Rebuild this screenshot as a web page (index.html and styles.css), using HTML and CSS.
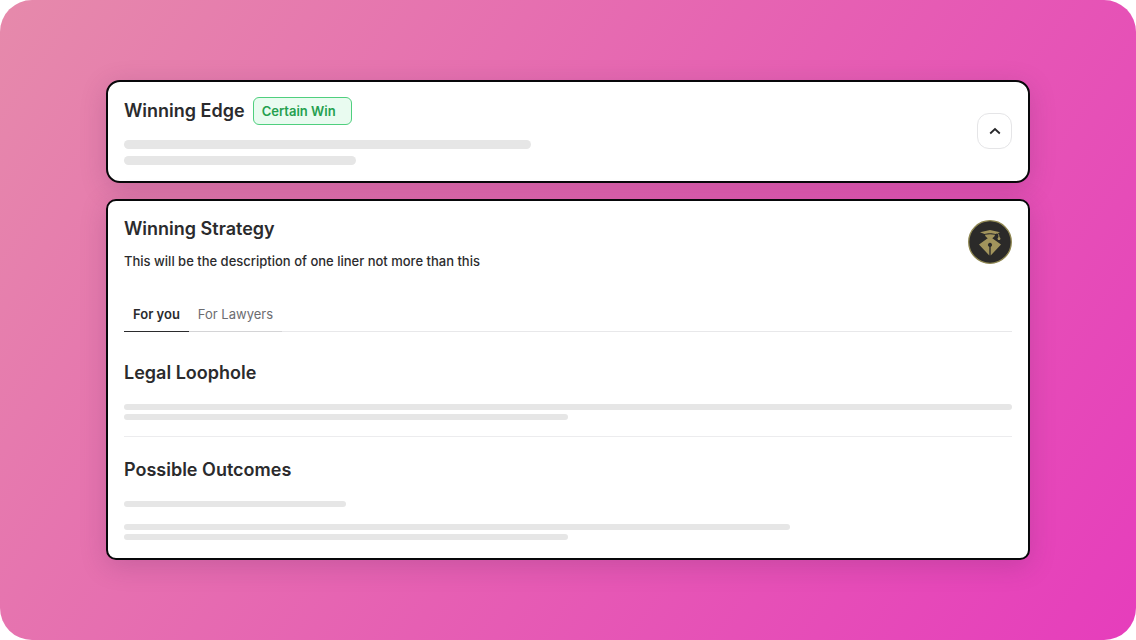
FILE: index.html
```html
<!DOCTYPE html>
<html lang="en">
<head>
<meta charset="utf-8">
<meta name="viewport" content="width=device-width, initial-scale=1">
<title>Winning Edge</title>
<link rel="stylesheet" href="styles.css">
</head>
<body>
<main class="stage">
  <section class="card edge">
    <div class="edge-body">
      <div class="edge-head">
        <h2 class="title">Winning Edge</h2>
        <span class="badge">Certain Win</span>
      </div>
      <div class="bars bars-thick">
        <span class="bar w-edge-long"></span>
        <span class="bar w-edge-short"></span>
      </div>
    </div>
    <button class="toggle" type="button" aria-label="Collapse">
      <svg width="12" height="8" viewBox="0 0 12 8" fill="none" stroke="#27272a" stroke-width="1.8" stroke-linejoin="miter"><path d="M1.200 6.500 6 2l4.800 4.500"/></svg>
    </button>
  </section>

  <section class="card strategy">
    <header class="strategy-head">
      <div>
        <h2 class="title">Winning Strategy</h2>
        <p class="desc">This will be the description of one liner not more than this</p>
      </div>
      <svg class="avatar" viewBox="0 0 44 44" role="img" aria-label="Legal tutor">
        <circle cx="22" cy="22" r="21.300" fill="#2b2a29" stroke="#8f8751" stroke-width="1.300"/>
        <g fill="#a2945c">
          <path d="M12 12.300 22 10l10 2.300-4.500 1.700c-3-1-8-1-11 0z"/>
          <path d="M17 14.800c3-.9 7-.9 10 0-.2 1.700-1.500 2.700-2.700 3.500l8.700 6.200L22.700 35.500v-8.600a2.100 2.100 0 1 0-1.400 0v8.600L11 24.500l8.700-6.200c-1.200-.8-2.500-1.800-2.700-3.500z"/>
          <path d="M31 16.500l1.500 1.800-.5 1.700h-2l-.5-1.700z"/>
        </g>
        <path d="M29.500 13.200q1.500.8 1.500 4.300" fill="none" stroke="#a2945c" stroke-width=".9"/>
      </svg>
    </header>

    <div class="tabs" role="tablist">
      <button class="tab tab-active" type="button" role="tab" aria-selected="true">For you</button>
      <button class="tab" type="button" role="tab" aria-selected="false">For Lawyers</button>
    </div>

    <section class="block">
      <h3 class="title">Legal Loophole</h3>
      <div class="bars">
        <span class="bar w-full"></span>
        <span class="bar w-half"></span>
      </div>
    </section>

    <section class="block block-last">
      <h3 class="title">Possible Outcomes</h3>
      <div class="bars">
        <span class="bar w-quarter"></span>
      </div>
      <div class="bars bars-next">
        <span class="bar w-three-quarter"></span>
        <span class="bar w-half"></span>
      </div>
    </section>
  </section>
</main>
</body>
</html>
```
FILE: styles.css
```css
* {
  box-sizing: border-box;
}

body {
  margin: 0;
  background: #fff;
  color: #2b2b2d;
  font-family: Inter, "Liberation Sans", sans-serif;
}

h2, h3, p {
  margin: 0;
}

button {
  font: inherit;
  cursor: pointer;
}

.stage {
  display: flex;
  flex-direction: column;
  gap: 16px;
  min-height: 100vh;
  padding: 80px 106px;
  border-radius: 32px;
  background: linear-gradient(125deg, #e68aab 0%, #e65fb3 54%, #e63dbc 100%);
}

.card {
  border: 2px solid #08080a;
  border-radius: 14px;
  background: #fff;
  box-shadow: 0 6px 26px rgba(90, 40, 90, 0.22);
}

.title {
  font-size: 18px;
  font-weight: 600;
  line-height: 26px;
}

.edge {
  display: flex;
  align-items: center;
  justify-content: space-between;
  padding: 15px 16px 16px;
}

.edge-body {
  flex: 1;
}

.edge-head {
  display: flex;
  align-items: center;
  gap: 8px;
}

.badge {
  padding: 4px 15px 4px 8px;
  border: 1px solid #4fcf7e;
  border-radius: 6px;
  background: #e9fbf0;
  color: #25a04f;
  font-size: 13px;
  font-weight: 600;
  line-height: 18px;
}

.bars {
  display: flex;
  flex-direction: column;
  gap: 4px;
  margin-top: 18px;
}

.bar {
  height: 6px;
  border-radius: 3px;
  background: #e6e6e6;
}

.bars-thick {
  gap: 7px;
  margin-top: 15px;
}

.bars-thick .bar {
  height: 9px;
  border-radius: 5px;
}

.w-edge-long {
  width: 407px;
  max-width: 100%;
}

.w-edge-short {
  width: 232px;
  max-width: 100%;
}

.w-full {
  width: 100%;
}

.w-half {
  width: 50%;
}

.w-quarter {
  width: 25%;
}

.w-three-quarter {
  width: 75%;
}

.toggle {
  display: flex;
  align-items: center;
  justify-content: center;
  width: 35px;
  height: 36px;
  padding: 0;
  border: 1px solid #e5e5e7;
  border-radius: 12px;
  background: #fff;
}

.strategy {
  border-radius: 10px;
  padding: 15px 16px 18px;
}

.strategy-head {
  display: flex;
  justify-content: space-between;
}

.desc {
  margin-top: 9px;
  font-size: 13px;
  font-weight: 500;
  line-height: 20px;
}

.avatar {
  width: 44px;
  height: 44px;
  margin-top: 4px;
}

.tabs {
  display: flex;
  margin-top: 26px;
  border-bottom: 1px solid #e8e8ea;
}

.tab {
  margin-bottom: -1px;
  padding: 8px 9px;
  border: 0;
  border-bottom: 1px solid #d4d4d6;
  background: none;
  color: #6c6c70;
  font-size: 13px;
  font-weight: 400;
  line-height: 18px;
}

.tab-active {
  border-color: #2b2b2d;
  color: #2b2b2d;
  font-weight: 600;
}

.block {
  padding: 28px 0 16px;
  border-bottom: 1px solid #ececee;
}

.block-last {
  padding: 20px 0 0;
  border-bottom: 0;
}

.bars-next {
  margin-top: 17px;
}
```
